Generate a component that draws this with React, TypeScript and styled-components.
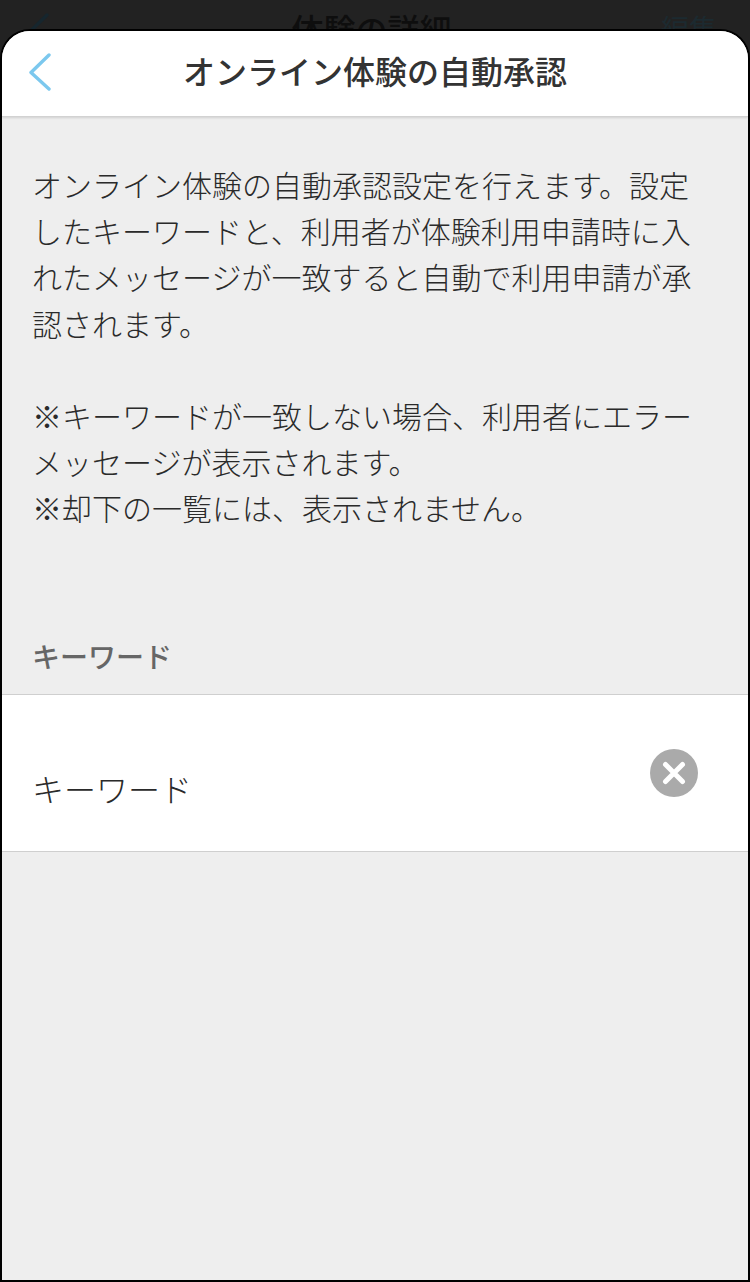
import { createGlobalStyle } from 'styled-components';
import styled from 'styled-components';

const GlobalStyle = createGlobalStyle`
  html, body {
    margin: 0;
    padding: 0;
    background: #222222;
  }

  * {
    box-sizing: border-box;
  }
`;

const Screen = styled.div`
  width: 750px;
  height: 1282px;
  display: flex;
  flex-direction: column;
  background: #222222;
  font-family: 'Noto Sans CJK JP', 'Noto Sans', sans-serif;
  color: #333333;
  overflow: hidden;
`;

const BehindBar = styled.div`
  height: 29px;
  flex-shrink: 0;
  display: grid;
  grid-template-columns: 1fr auto 1fr;
  align-items: start;
  padding: 0 33px 0 26px;
  overflow: hidden;
`;

const BehindBack = styled.svg`
  width: 24px;
  height: 38px;
  margin-top: 13px;
`;

const BehindTitle = styled.span`
  margin-top: 6px;
  font-size: 32px;
  line-height: 44px;
  font-weight: 500;
  color: #0e0e0e;
`;

const BehindAction = styled.span`
  justify-self: end;
  margin-top: 8px;
  font-size: 28px;
  line-height: 40px;
  color: #1c2a30;
`;

const Sheet = styled.div`
  flex: 1;
  display: flex;
  flex-direction: column;
  background: #eeeeee;
  border: 2px solid #000000;
  border-radius: 30px 30px 0 0;
  overflow: hidden;
`;

const Header = styled.header`
  position: relative;
  height: 86px;
  flex-shrink: 0;
  display: flex;
  align-items: center;
  justify-content: center;
  padding-bottom: 7px;
  background: #ffffff;
  border-bottom: 1px solid #d2d2d2;
  box-shadow: 0 1px 2px rgba(0, 0, 0, 0.12);
`;

const BackIcon = styled.svg`
  position: absolute;
  left: 26px;
  top: 22px;
  width: 24px;
  height: 38px;
`;

const Title = styled.h1`
  margin: 0;
  font-size: 32px;
  font-weight: 500;
  line-height: 44px;
`;

const Intro = styled.p`
  margin: 0;
  padding: 44px 30px 0;
  font-size: 30px;
  line-height: 46.2px;
  font-weight: 300;
  color: #2a2a2a;
  white-space: pre-line;
`;

const FieldLabel = styled.h2`
  margin: 104px 0 0;
  padding: 0 30px 17px;
  font-size: 28px;
  line-height: 42px;
  font-weight: 500;
  color: #666666;
`;

const FieldRow = styled.div`
  height: 158px;
  display: flex;
  justify-content: space-between;
  background: #ffffff;
  border-top: 1px solid #cfcfcf;
  border-bottom: 1px solid #cfcfcf;
  padding: 0 50px 0 30px;
`;

const FieldValue = styled.span`
  margin-top: 70px;
  font-size: 32px;
  line-height: 46px;
  font-weight: 300;
  color: #2a2a2a;
`;

const ClearButton = styled.button`
  width: 48px;
  height: 48px;
  margin-top: 54px;
  padding: 0;
  display: flex;
  border: 0;
  border-radius: 50%;
  background: #aaaaaa;
`;

export default function App() {
  return (
    <>
      <GlobalStyle />
      <Screen>
        <BehindBar>
          <BehindBack viewBox="0 0 24 38" fill="none">
            <path d="M21 2 L3 19.5 L21 36" stroke="#16262e" strokeWidth="3.4" strokeLinecap="round" />
          </BehindBack>
          <BehindTitle>体験の詳細</BehindTitle>
          <BehindAction>編集</BehindAction>
        </BehindBar>
        <Sheet>
          <Header>
            <BackIcon viewBox="0 0 24 38" fill="none">
              <path
                d="M21 2 L3 19.5 L21 36"
                stroke="#7cc8ee"
                strokeWidth="3.4"
                strokeLinecap="round"
                strokeLinejoin="round"
              />
            </BackIcon>
            <Title>オンライン体験の自動承認</Title>
          </Header>
          <Intro>
            {`オンライン体験の自動承認設定を行えます。設定
したキーワードと、利用者が体験利用申請時に入
れたメッセージが一致すると自動で利用申請が承
認されます。

※キーワードが一致しない場合、利用者にエラー
メッセージが表示されます。
※却下の一覧には、表示されません。`}
          </Intro>
          <FieldLabel>キーワード</FieldLabel>
          <FieldRow>
            <FieldValue>キーワード</FieldValue>
            <ClearButton type="button" aria-label="クリア">
              <svg width="48" height="48" viewBox="0 0 48 48" fill="none">
                <path
                  d="M15.5 15.5 L32.5 32.5 M32.5 15.5 L15.5 32.5"
                  stroke="#ffffff"
                  strokeWidth="5"
                  strokeLinecap="round"
                />
              </svg>
            </ClearButton>
          </FieldRow>
        </Sheet>
      </Screen>
    </>
  );
}
